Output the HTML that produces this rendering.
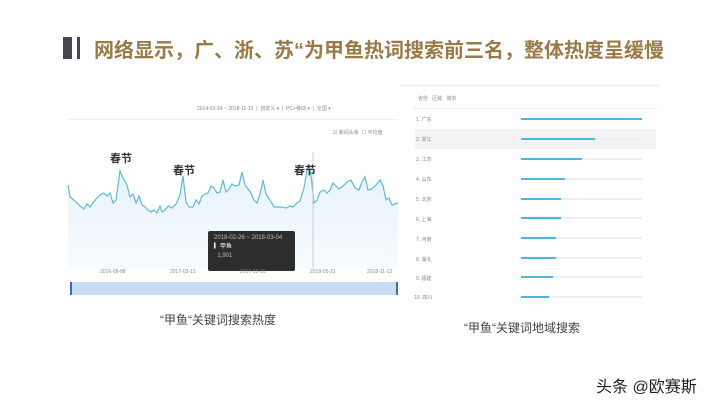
<!DOCTYPE html><html><head><meta charset="utf-8"><style>
body{margin:0;width:720px;height:405px;background:#fff;position:relative;overflow:hidden;font-family:"Liberation Sans","Noto Sans CJK SC",sans-serif}
.a{position:absolute;white-space:nowrap}
.s{font-size:5px;color:#888}
</style></head><body>
<div class="a" style="left:63px;top:37px;width:9px;height:22px;background:#4a4550"></div>
<div class="a" style="left:77px;top:37px;width:3px;height:22px;background:#4a4550"></div>
<div class="a" style="left:94px;top:34px;font-size:20px;font-weight:bold;color:#9a7a45;letter-spacing:0px">网络显示，广、浙、苏“为甲鱼热词搜索前三名，整体热度呈缓慢</div>

<!-- left chart -->
<div class="a s" style="left:197px;top:105px">2014-03-24 ~ 2018-11-12 &nbsp;| &nbsp;自定义 ▾ &nbsp;| &nbsp;PC+移动 ▾ &nbsp;| &nbsp;全国 ▾</div>
<div class="a" style="left:68px;top:119px;width:330px;height:1px;background:#f0f0f0"></div>
<div class="a s" style="left:333px;top:129px">☑ 新闻头条 &nbsp;☐ 平均值</div>
<svg class="a" style="left:0;top:0" width="720" height="405">
<defs><linearGradient id="g" x1="0" y1="0" x2="0" y2="1"><stop offset="0" stop-color="#e6f3fb"/><stop offset="1" stop-color="#f7fbfe"/></linearGradient></defs>
<path d="M68,185 L70,197 L75,201 L80,206 L84,209 L87,204 L90,207 L93,203 L96,199 L100,195 L104,193 L107,196 L110,193 L113,203 L116,200 L120,171 L123,178 L127,185 L130,197 L133,194 L136,203 L139,196 L142,205 L145,207 L148,210 L151,212 L154,210 L157,213 L160,206 L162,212 L165,210 L168,206 L172,208 L176,204 L180,195 L183,176 L186,202 L189,207 L193,207 L196,200 L199,204 L202,196 L205,194 L208,193 L211,186 L214,188 L217,193 L220,192 L223,180 L226,192 L229,189 L232,184 L235,186 L239,185 L242,172 L245,185 L248,189 L251,193 L254,200 L257,203 L260,194 L263,180 L266,194 L270,200 L274,207 L278,207 L282,207 L286,208 L290,206 L293,207 L297,203 L300,201 L304,188 L307,170 L309,164 L311,175 L314,203 L317,200 L320,192 L324,190 L327,193 L330,190 L333,183 L336,186 L339,189 L343,186 L347,182 L351,180 L355,188 L359,190 L362,182 L365,177 L368,190 L372,189 L376,185 L380,180 L383,186 L386,200 L389,198 L392,205 L395,204 L398,203 L398,268 L68,268 Z" fill="url(#g)"/>
<path d="M68,185 L70,197 L75,201 L80,206 L84,209 L87,204 L90,207 L93,203 L96,199 L100,195 L104,193 L107,196 L110,193 L113,203 L116,200 L120,171 L123,178 L127,185 L130,197 L133,194 L136,203 L139,196 L142,205 L145,207 L148,210 L151,212 L154,210 L157,213 L160,206 L162,212 L165,210 L168,206 L172,208 L176,204 L180,195 L183,176 L186,202 L189,207 L193,207 L196,200 L199,204 L202,196 L205,194 L208,193 L211,186 L214,188 L217,193 L220,192 L223,180 L226,192 L229,189 L232,184 L235,186 L239,185 L242,172 L245,185 L248,189 L251,193 L254,200 L257,203 L260,194 L263,180 L266,194 L270,200 L274,207 L278,207 L282,207 L286,208 L290,206 L293,207 L297,203 L300,201 L304,188 L307,170 L309,164 L311,175 L314,203 L317,200 L320,192 L324,190 L327,193 L330,190 L333,183 L336,186 L339,189 L343,186 L347,182 L351,180 L355,188 L359,190 L362,182 L365,177 L368,190 L372,189 L376,185 L380,180 L383,186 L386,200 L389,198 L392,205 L395,204 L398,203" fill="none" stroke="#5bbcd8" stroke-width="1.2"/>
<line x1="313" y1="152" x2="313" y2="268" stroke="#ccc" stroke-width="1"/>
</svg>
<div class="a" style="left:110px;top:150px;font-size:11px;font-weight:bold;color:#333">春节</div>
<div class="a" style="left:173px;top:162px;font-size:11px;font-weight:bold;color:#333">春节</div>
<div class="a" style="left:294px;top:162px;font-size:11px;font-weight:bold;color:#333">春节</div>
<div class="a" style="left:208px;top:231px;width:87px;height:40px;background:#2d2d2d;border-radius:2px;font-size:6px;color:#bbb;line-height:9px;padding:3px 6px;box-sizing:border-box">2018-02-26 ~ 2018-03-04<br><span style="color:#fff">▎甲鱼</span><br>&nbsp; 1,901</div>
<div class="a s" style="left:100px;top:269px">2016-08-08</div>
<div class="a s" style="left:170px;top:269px">2017-03-13</div>
<div class="a s" style="left:240px;top:269px">2017-10-16</div>
<div class="a s" style="left:310px;top:269px">2018-05-21</div>
<div class="a s" style="left:367px;top:269px">2018-11-12</div>
<div class="a" style="left:70px;top:282px;width:328px;height:13px;background:#c9ddf6;border-left:2px solid #3d6fb5;border-right:2px solid #3d6fb5;box-sizing:border-box"></div>
<div class="a" style="left:160px;top:311px;font-size:12px;color:#444">“甲鱼“关键词搜索热度</div>

<!-- right table -->
<div class="a" style="left:400px;top:85px;width:260px;height:1px;background:#eee"></div>
<div class="a s" style="left:418px;top:95px">省份 &nbsp; 区域 &nbsp; 城市</div>
<div class="a" style="left:413px;top:108px;width:245px;height:1px;background:#eee"></div>
<div class="a" style="left:415px;top:129px;width:241px;height:20px;background:#f3f3f3"></div>
<div id="rows"></div>
<script></script>
<div class="a s" style="left:416px;top:116px">1. 广东</div><div class="a" style="left:521px;top:118px;width:121px;height:2px;background:#eee"></div><div class="a" style="left:521px;top:118px;width:121px;height:2px;background:#4ab8dc"></div>
<div class="a s" style="left:416px;top:136px">2. 浙江</div><div class="a" style="left:521px;top:138px;width:121px;height:2px;background:#eee"></div><div class="a" style="left:521px;top:138px;width:74px;height:2px;background:#4ab8dc"></div>
<div class="a s" style="left:416px;top:156px">3. 江苏</div><div class="a" style="left:521px;top:158px;width:121px;height:2px;background:#eee"></div><div class="a" style="left:521px;top:158px;width:61px;height:2px;background:#4ab8dc"></div>
<div class="a s" style="left:416px;top:176px">4. 山东</div><div class="a" style="left:521px;top:178px;width:121px;height:2px;background:#eee"></div><div class="a" style="left:521px;top:178px;width:44px;height:2px;background:#4ab8dc"></div>
<div class="a s" style="left:416px;top:196px">5. 北京</div><div class="a" style="left:521px;top:198px;width:121px;height:2px;background:#eee"></div><div class="a" style="left:521px;top:198px;width:40px;height:2px;background:#4ab8dc"></div>
<div class="a s" style="left:416px;top:216px">6. 上海</div><div class="a" style="left:521px;top:217px;width:121px;height:2px;background:#eee"></div><div class="a" style="left:521px;top:217px;width:40px;height:2px;background:#4ab8dc"></div>
<div class="a s" style="left:416px;top:236px">7. 河南</div><div class="a" style="left:521px;top:237px;width:121px;height:2px;background:#eee"></div><div class="a" style="left:521px;top:237px;width:35px;height:2px;background:#4ab8dc"></div>
<div class="a s" style="left:416px;top:256px">8. 湖北</div><div class="a" style="left:521px;top:257px;width:121px;height:2px;background:#eee"></div><div class="a" style="left:521px;top:257px;width:35px;height:2px;background:#4ab8dc"></div>
<div class="a s" style="left:416px;top:275px">9. 福建</div><div class="a" style="left:521px;top:276px;width:121px;height:2px;background:#eee"></div><div class="a" style="left:521px;top:276px;width:32px;height:2px;background:#4ab8dc"></div>
<div class="a s" style="left:414px;top:294px">10. 四川</div><div class="a" style="left:521px;top:296px;width:121px;height:2px;background:#eee"></div><div class="a" style="left:521px;top:296px;width:28px;height:2px;background:#4ab8dc"></div>
<div class="a" style="left:464px;top:319px;font-size:12px;color:#444">“甲鱼“关键词地域搜索</div>

<div class="a" style="left:596px;top:373px;font-size:16px;color:#222">头条 @欧赛斯</div>
</body></html>
